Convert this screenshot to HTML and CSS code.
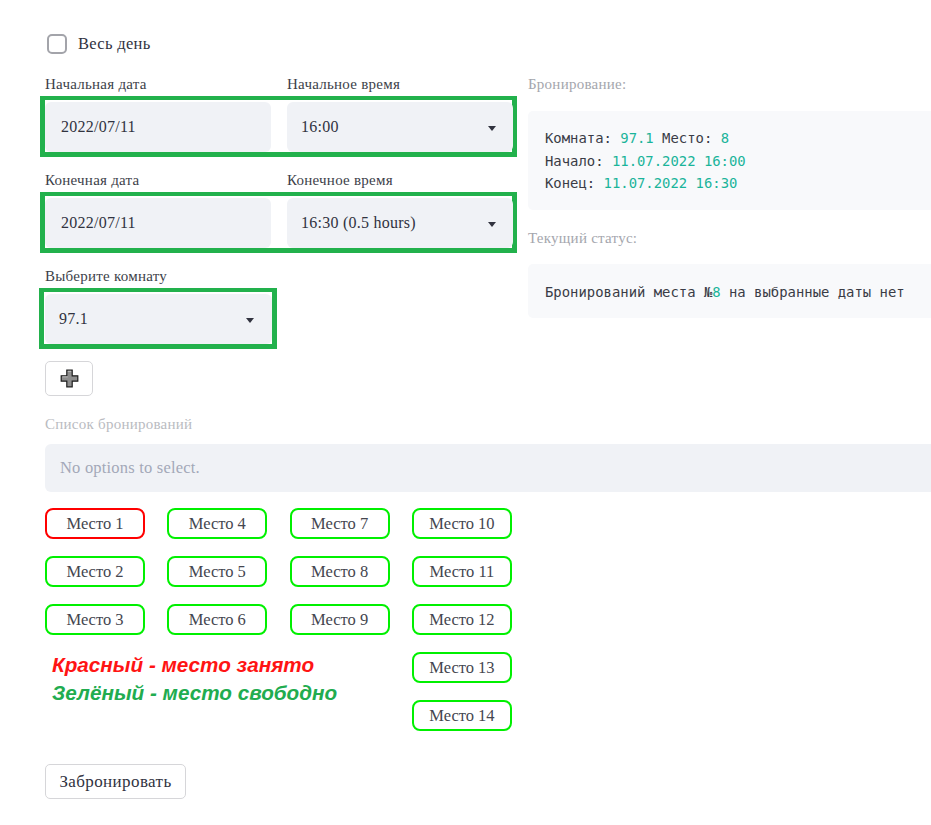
FILE: index.html
```html
<!DOCTYPE html>
<html lang="ru">
<head>
<meta charset="utf-8">
<title>Бронирование</title>
<link rel="stylesheet" href="styles.css">
</head>
<body>
<div class="page">
  <label class="checkbox-row">
    <span class="checkbox"></span>
    <span class="checkbox-label">Весь день</span>
  </label>

  <div class="columns">
    <div class="left">
      <div class="field-group">
        <div class="labels two">
          <span class="label">Начальная дата</span>
          <span class="label">Начальное время</span>
        </div>
        <div class="green-box two">
          <div class="input">2022/07/11</div>
          <div class="select"><span>16:00</span><span class="arrow"></span></div>
        </div>
      </div>

      <div class="field-group">
        <div class="labels two">
          <span class="label">Конечная дата</span>
          <span class="label">Конечное время</span>
        </div>
        <div class="green-box two">
          <div class="input">2022/07/11</div>
          <div class="select"><span>16:30 (0.5 hours)</span><span class="arrow"></span></div>
        </div>
      </div>

      <div class="field-group">
        <div class="labels">
          <span class="label">Выберите комнату</span>
        </div>
        <div class="green-box narrow">
          <div class="select room"><span>97.1</span><span class="arrow"></span></div>
        </div>
      </div>

      <button class="plus-btn" type="button" aria-label="Добавить">
        <svg width="19" height="19" viewBox="0 0 19 19">
          <path d="M6.8 1.2 H12.2 V6.8 H17.8 V12.2 H12.2 V17.8 H6.8 V12.2 H1.2 V6.8 H6.8 Z" fill="#8e8e8e" stroke="#1e1e1e" stroke-width="1.2" stroke-linejoin="miter"/>
          <path d="M7.8 2.3 H11.2 M2.3 7.8 H7.8" fill="none" stroke="#c8c8c8" stroke-width="0.9"/>
        </svg>
      </button>
    </div>

    <div class="right">
      <div class="label muted">Бронирование:</div>
      <pre class="code booking">Комната: <span class="num">97.1</span> Место: <span class="num">8</span>
Начало: <span class="num">11.07.2022 16:00</span>
Конец: <span class="num">11.07.2022 16:30</span></pre>
      <div class="label muted status-label">Текущий статус:</div>
      <pre class="code status">Бронирований места №<span class="num">8</span> на выбранные даты нет</pre>
    </div>
  </div>

  <div class="label lighter list-label">Список бронирований</div>
  <div class="multiselect">No options to select.</div>

  <div class="seats">
    <button class="seat busy" type="button">Место 1</button>
    <button class="seat" type="button">Место 4</button>
    <button class="seat" type="button">Место 7</button>
    <button class="seat" type="button">Место 10</button>
    <button class="seat" type="button">Место 2</button>
    <button class="seat" type="button">Место 5</button>
    <button class="seat" type="button">Место 8</button>
    <button class="seat" type="button">Место 11</button>
    <button class="seat" type="button">Место 3</button>
    <button class="seat" type="button">Место 6</button>
    <button class="seat" type="button">Место 9</button>
    <button class="seat" type="button">Место 12</button>
    <div class="legend">
      <div class="legend-red">Красный - место занято</div>
      <div class="legend-green">Зелёный - место свободно</div>
    </div>
    <button class="seat col4" type="button">Место 13</button>
    <button class="seat col4" type="button">Место 14</button>
  </div>

  <button class="book-btn" type="button">Забронировать</button>
</div>
</body>
</html>
```

FILE: styles.css
```css
* { box-sizing: border-box; }

html, body {
  margin: 0;
  padding: 0;
  background: #ffffff;
  overflow: hidden;
}

body {
  font-family: "Liberation Serif", "DejaVu Serif", serif;
  color: #31333f;
  width: 931px;
  height: 825px;
}

.page {
  width: 990px;
  padding: 33px 0 0 45px;
}

/* checkbox */
.checkbox-row {
  display: flex;
  align-items: center;
  height: 22px;
  margin-left: 2px;
}
.checkbox {
  width: 20px;
  height: 20px;
  border: 2px solid #a3a4aa;
  border-radius: 5px;
  background: #fff;
}
.checkbox-label {
  margin-left: 11px;
  font-size: 16.5px;
  letter-spacing: 0.3px;
  line-height: 22px;
}

/* columns */
.columns {
  display: flex;
  margin-top: 18px;
  margin-left: -5px;
}
.left {
  width: 477px;
  flex: none;
}
.right {
  margin-left: 11px;
  width: 460px;
  flex: none;
}

.label {
  display: block;
  font-size: 15px;
  letter-spacing: 0.25px;
  line-height: 22px;
  color: #3d3f4a;
}
.muted { color: #a4a6ad; }
.lighter { color: #b9bbc1; }

.field-group { margin-bottom: 12px; }

.labels {
  display: grid;
  grid-template-columns: 226px 226px;
  column-gap: 16px;
  padding: 0 5px;
  margin-bottom: 1px;
}
.labels .label { white-space: nowrap; }

.green-box {
  border: 5px solid #22b14c;
  border-top-width: 4px;
  padding-top: 2px;
}
.green-box.two {
  display: grid;
  grid-template-columns: 226px 226px;
  column-gap: 16px;
  width: 477px;
  padding-left: 0;
}
.green-box.narrow {
  width: 238px;
  margin-left: -1px;
  padding-left: 1px;
}

.input, .select {
  height: 50px;
  background: #f0f2f6;
  border-radius: 6px;
  font-size: 16px;
  letter-spacing: 0.25px;
  display: flex;
  align-items: center;
  color: #31333f;
}
.input { padding-left: 16px; }
.select {
  padding: 0 17px 0 14px;
  justify-content: space-between;
}
.select.room { width: 227px; padding-right: 18px; }
.arrow {
  width: 0;
  height: 0;
  border-left: 4.5px solid transparent;
  border-right: 4.5px solid transparent;
  border-top: 5px solid #31333f;
  margin-top: 2px;
}

.plus-btn {
  display: flex;
  align-items: center;
  justify-content: center;
  width: 48px;
  height: 35px;
  margin-left: 5px;
  padding: 0;
  background: #fff;
  border: 1px solid #d6d6d9;
  border-radius: 5px;
}

/* right column */
.code {
  margin: 0;
  background: #f8f9fb;
  border-radius: 5px;
  font-family: "DejaVu Sans Mono", "Liberation Mono", monospace;
  font-size: 13.9px;
  line-height: 22.5px;
  color: #3a3c46;
}
.booking {
  margin-top: 16px;
  height: 99px;
  padding: 16px 17px;
}
.status-label { margin-top: 17px; }
.status {
  margin-top: 15px;
  height: 54px;
  padding: 17px 17px 15px;
}
.num { color: #1ab49a; }

/* list */
.list-label { margin-top: 17px; }
.multiselect {
  margin-top: 9px;
  height: 48px;
  width: 945px;
  background: #f0f2f6;
  border-radius: 6px;
  padding-left: 15px;
  display: flex;
  align-items: center;
  font-size: 16.5px;
  letter-spacing: 0.2px;
  color: #a3a8b8;
}

/* seats */
.seats {
  margin-top: 16px;
  display: grid;
  grid-template-columns: repeat(4, 100px);
  grid-auto-rows: 31px;
  column-gap: 22.3px;
  row-gap: 17px;
}
.seat {
  font-family: "Liberation Serif", "DejaVu Serif", serif;
  font-size: 16.5px;
  color: #44464f;
  background: #fff;
  border: 2px solid #00f000;
  border-radius: 8px;
  padding: 0;
  height: 31px;
}
.seat.busy { border-color: #ff0000; }
.seat.col4 { grid-column: 4; }

.legend {
  grid-column: 1 / span 3;
  grid-row: 4 / span 2;
  padding-left: 7px;
  margin-top: -1px;
  font-family: "Liberation Sans", Arial, sans-serif;
  font-weight: bold;
  font-style: italic;
  font-size: 20.7px;
  line-height: 28px;
  white-space: nowrap;
}
.legend-red { color: #ff1414; }
.legend-green { color: #21ac4f; }

.book-btn {
  margin-top: 33px;
  width: 141px;
  height: 35px;
  background: #fff;
  border: 1px solid #d6d6d9;
  border-radius: 5px;
  font-family: "Liberation Serif", "DejaVu Serif", serif;
  font-size: 17px;
  letter-spacing: 0.4px;
  color: #31333f;
  padding: 0;
}
```
